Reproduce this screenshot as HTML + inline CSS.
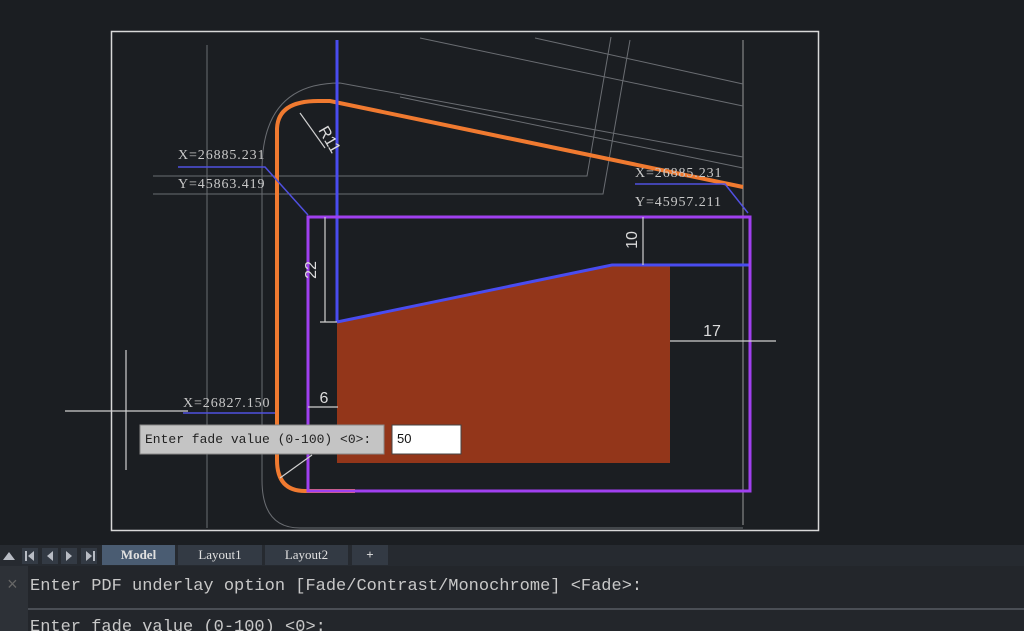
<!DOCTYPE html>
<html><head><style>
body{margin:0;width:1024px;height:631px;overflow:hidden;background:#1b1e22;font-family:"Liberation Mono",monospace}
svg{position:absolute;left:0;top:0}
.tab{position:absolute;top:545px;height:20px;background:#333a44;color:#e0e0e0;font:bold 13px "Liberation Serif",serif;text-align:center;line-height:20px}
</style></head><body>
<svg width="1024" height="631">
<rect x="0" y="0" width="1024" height="545" fill="#1b1e22"/>
<rect x="111.5" y="31.5" width="707" height="499" fill="none" stroke="#d8d8d8" stroke-width="1.5"/>
<g stroke="#6a6d72" stroke-width="1" fill="none">
<line x1="743" y1="40" x2="743" y2="525" stroke="#9a9a9a"/>
<line x1="207" y1="45" x2="207" y2="528"/>
<polyline points="153,176 587,176 611,37"/>
<polyline points="153,194 603,194 630,40"/>
<line x1="420" y1="38" x2="743" y2="106"/>
<line x1="535" y1="38" x2="743" y2="84"/>
<line x1="400" y1="97" x2="743" y2="168"/>
<path d="M340,83 L743,157 M340,83 Q262,83 262,170 L262,480 Q262,528 300,528 L743,528"/>
</g>
<polygon points="337,322 612,265 670,265 670,463 337,463" fill="#93361a"/>
<path d="M355,491 L305,491 Q277,491 277,460 L277,130 Q277,101 318,101 L330,101 L743,187" fill="none" stroke="#f07a30" stroke-width="4"/>
<g stroke="#4a4cf0" stroke-width="3" fill="none">
<line x1="337" y1="40" x2="337" y2="322"/>
<polyline points="337,322 612,265 750,265"/>
</g>
<rect x="308" y="217" width="442" height="274" fill="none" stroke="#a040f0" stroke-width="3"/>
<g stroke="#5050e0" stroke-width="1.5" fill="none">
<polyline points="178,167 265,167 308,215"/>
<polyline points="635,184 725,184 748,213"/>
<line x1="183" y1="413" x2="275" y2="413"/>
</g>
<g stroke="#d0d0d0" stroke-width="1.2" fill="none">
<line x1="325" y1="217" x2="325" y2="322"/><line x1="320" y1="322" x2="337" y2="322"/>
<line x1="643" y1="217" x2="643" y2="265"/>
<line x1="670" y1="341" x2="776" y2="341"/>
<line x1="308" y1="407" x2="338" y2="407"/>
<line x1="300" y1="113" x2="325" y2="148"/>
<line x1="280" y1="478" x2="312" y2="455"/>
<line x1="65" y1="411" x2="188" y2="411"/><line x1="126" y1="350" x2="126" y2="470"/>
</g>
<g fill="#dcdcdc" font-family="Liberation Sans,sans-serif" font-size="16">
<text x="316" y="270" transform="rotate(-90 316 270)" text-anchor="middle">22</text>
<text x="637" y="240" transform="rotate(-90 637 240)" text-anchor="middle">10</text>
<text x="712" y="336" text-anchor="middle">17</text>
<text x="324" y="403" text-anchor="middle">6</text>
<text x="318" y="130" transform="rotate(60 318 130)">R11</text>
</g>
<g fill="#c8c8c8" font-family="Liberation Serif,serif" font-size="14" letter-spacing="0.9">
<text x="178" y="159">X=26885.231</text>
<text x="178" y="188">Y=45863.419</text>
<text x="635" y="177">X=26885.231</text>
<text x="635" y="206">Y=45957.211</text>
<text x="183" y="407">X=26827.150</text>
</g>
<rect x="140" y="425" width="244" height="29" fill="#c4c4c4" stroke="#888"/>
<text x="145" y="443" font-family="Liberation Mono,monospace" font-size="13" fill="#222">Enter fade value (0-100) &lt;0&gt;:</text>
<rect x="392" y="425" width="69" height="29" fill="#fff" stroke="#444"/>
<text x="397" y="443" font-family="Liberation Sans,sans-serif" font-size="13" fill="#111">50</text>
<rect x="0" y="545" width="1024" height="21" fill="#262a30"/>
<rect x="0" y="566" width="1024" height="65" fill="#23262b"/>
<rect x="0" y="566" width="28" height="65" fill="#2d3137"/>
<line x1="28" y1="609" x2="1024" y2="609" stroke="#4a4e55" stroke-width="2"/>
<g fill="#b8bcc4"><polygon points="3,560 9,552 15,560"/>
<rect x="22" y="548" width="16" height="16" fill="#333a44"/><rect x="42" y="548" width="16" height="16" fill="#333a44"/><rect x="61" y="548" width="16" height="16" fill="#333a44"/><rect x="81" y="548" width="16" height="16" fill="#333a44"/>
<rect x="25" y="551" width="2" height="10"/><polygon points="34,551 28,556 34,561"/>
<polygon points="53,551 47,556 53,561"/><polygon points="66,551 72,556 66,561"/>
<polygon points="86,551 92,556 86,561"/><rect x="93" y="551" width="2" height="10"/></g>
<text x="7" y="590" font-size="18" fill="#666">×</text>
<g fill="#c8c8c8" font-family="Liberation Mono,monospace" font-size="17">
<text x="30" y="590">Enter PDF underlay option [Fade/Contrast/Monochrome] &lt;Fade&gt;:</text>
<text x="30" y="631">Enter fade value (0-100) &lt;0&gt;:</text>
</g>
</svg>
<div class="tab" style="left:102px;width:73px;background:#4a5c72">Model</div>
<div class="tab" style="left:178px;width:84px;font-weight:normal">Layout1</div>
<div class="tab" style="left:265px;width:83px;font-weight:normal">Layout2</div>
<div class="tab" style="left:352px;width:36px">+</div>
</body></html>
